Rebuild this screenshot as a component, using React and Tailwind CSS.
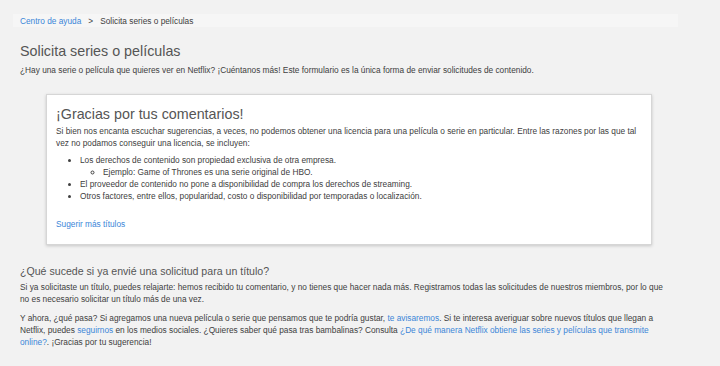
const Link = ({ children }) => (
  <a href="#" className="text-[#3b86d8]">
    {children}
  </a>
);

export default function App() {
  return (
    <div className="min-h-screen bg-[#f2f2f2] pt-[14px] pl-[13px] pr-[42px] font-['Liberation_Sans',Arial,sans-serif] text-[8.3px] leading-[12px] text-[#404040]">
      <nav className="flex h-[13px] items-center gap-[7px] bg-[#f6f6f6] px-[7px] text-[8.3px]">
        <Link>Centro de ayuda</Link>
        <span>&gt;</span>
        <span>Solicita series o películas</span>
      </nav>

      <main className="pl-[7px] pr-[8px]">
        <h1 className="mt-[15px] text-[14.3px] leading-[18px] text-[#555]">Solicita series o películas</h1>
        <p className="mt-[4px]">
          ¿Hay una serie o película que quieres ver en Netflix? ¡Cuéntanos más! Este formulario es la única forma de
          enviar solicitudes de contenido.
        </p>

        <section className="ml-[26px] mr-[18px] mt-[18px] border border-[#d6d6d6] bg-white px-[9px] pt-[10px] pb-[14px] shadow-[0_1px_3px_rgba(0,0,0,0.18)]">
          <h2 className="text-[14.3px] leading-[18px] text-[#555]">¡Gracias por tus comentarios!</h2>
          <p className="mt-[2px]">
            Si bien nos encanta escuchar sugerencias, a veces, no podemos obtener una licencia para una película o serie
            en particular. Entre las razones por las que tal vez no podamos conseguir una licencia, se incluyen:
          </p>
          <ul className="mt-[5px] list-disc pl-[24px]">
            <li>
              Los derechos de contenido son propiedad exclusiva de otra empresa.
              <ul className="list-[circle] pl-[23px]">
                <li>Ejemplo: Game of Thrones es una serie original de HBO.</li>
              </ul>
            </li>
            <li>El proveedor de contenido no pone a disponibilidad de compra los derechos de streaming.</li>
            <li>Otros factores, entre ellos, popularidad, costo o disponibilidad por temporadas o localización.</li>
          </ul>
          <p className="mt-[16px]">
            <Link>Sugerir más títulos</Link>
          </p>
        </section>

        <h2 className="mt-[19px] text-[10.6px] leading-[14px] text-[#555]">
          ¿Qué sucede si ya envié una solicitud para un título?
        </h2>
        <p className="mt-[3px]">
          Si ya solicitaste un título, puedes relajarte: hemos recibido tu comentario, y no tienes que hacer nada más.
          Registramos todas las solicitudes de nuestros miembros, por lo que no es necesario solicitar un título más de
          una vez.
        </p>
        <p className="mt-[7px]">
          Y ahora, ¿qué pasa? Si agregamos una nueva película o serie que pensamos que te podría gustar,{' '}
          <Link>te avisaremos</Link>. Si te interesa averiguar sobre nuevos títulos que llegan a Netflix, puedes{' '}
          <Link>seguirnos</Link> en los medios sociales. ¿Quieres saber qué pasa tras bambalinas? Consulta{' '}
          <Link>¿De qué manera Netflix obtiene las series y películas que transmite online?</Link>. ¡Gracias por tu
          sugerencia!
        </p>
      </main>
    </div>
  );
}
